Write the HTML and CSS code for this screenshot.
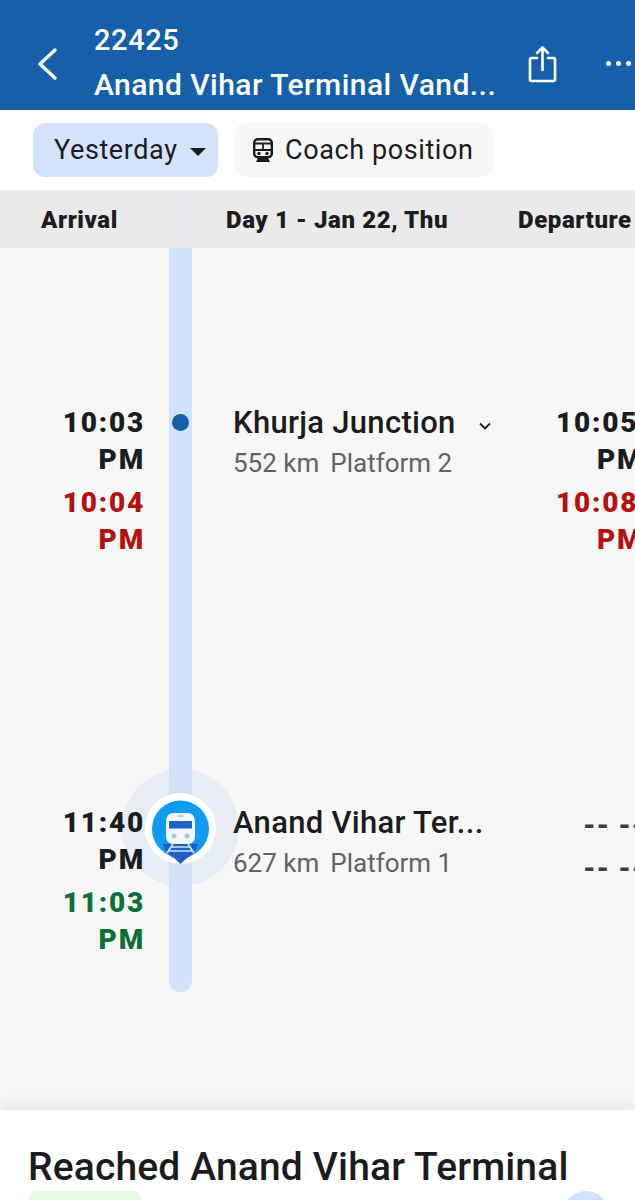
FILE: index.html
```html
<!DOCTYPE html>
<html lang="en">
<head>
    <meta charset="UTF-8">
    <title>22425</title>
    <link rel="stylesheet" href="styles.css">
</head>
<body>
<div class="app">
    <!--top bar-->
    <div class="topbar">
        <svg class="back" width="22" height="34" viewBox="0 0 22 34"><path d="M19 3 L4 17 L19 31" fill="none" stroke="#fff" stroke-width="3.4" stroke-linecap="round" stroke-linejoin="round"/></svg>
        <div class="titles">
            <div class="num">22425</div>
            <div class="name">Anand Vihar Terminal Vand...</div>
        </div>
        <svg class="share" width="30" height="38" viewBox="0 0 30 38"><path d="M9 13 H3.500 a1.500 1.500 0 0 0 -1.500 1.500 V34.500 a1.500 1.500 0 0 0 1.500 1.500 H25.500 a1.500 1.500 0 0 0 1.500 -1.500 V14.500 A1.500 1.500 0 0 0 25.500 13 H20 M14.500 25 V3 M9 8 L14.500 2.500 L20 8" fill="none" stroke="#fff" stroke-width="2.600" stroke-linecap="round" stroke-linejoin="round"/></svg>
        <div class="more"><i></i><i></i><i></i></div>
    </div>

    <!--filter buttons-->
    <div class="toolbar">
        <div class="chip chip-blue">Yesterday <span class="caret"></span></div>
        <div class="chip chip-gray">
            <svg width="20" height="24" viewBox="0 0 20 24"><rect x="1.200" y="1.200" width="17.600" height="18" rx="3.500" fill="none" stroke="#1b1c1e" stroke-width="2.400"/><path d="M1 5.500 H19 M1 12 H19 M10 5.500 V12" stroke="#1b1c1e" stroke-width="1.800"/><circle cx="6" cy="15.500" r="1.700" fill="#1b1c1e"/><circle cx="14" cy="15.500" r="1.700" fill="#1b1c1e"/><path d="M3 24 H17 L15 20 H5 Z" fill="#1b1c1e"/></svg>
            Coach position
        </div>
    </div>

    <!--timeline-->
    <div class="timeline">
        <div class="rail"></div>
        <div class="heads">
            <div class="h-arr">Arrival</div>
            <div class="h-day">Day 1 - Jan 22, Thu</div>
            <div class="h-dep">Departure</div>
        </div>

        <div class="stop stop-first">
            <div class="times">
                <div>10:03</div>
                <div>PM</div>
                <div class="late">10:04</div>
                <div class="late">PM</div>
            </div>
            <div class="mark"><span class="dot"></span></div>
            <div class="station">
                <div class="st-name">Khurja Junction
                    <svg class="chev" width="14" height="10" viewBox="0 0 14 10"><path d="M2 2.500 L7 7.500 L12 2.500" fill="none" stroke="#1b1c1e" stroke-width="1.800"/></svg>
                </div>
                <div class="st-sub"><span>552 km</span><span>Platform 2</span></div>
            </div>
            <div class="times times-dep">
                <div>10:05</div>
                <div>PM</div>
                <div class="late">10:08</div>
                <div class="late">PM</div>
            </div>
        </div>

        <div class="stop stop-last">
            <div class="times">
                <div>11:40</div>
                <div>PM</div>
                <div class="early">11:03</div>
                <div class="early">PM</div>
            </div>
            <div class="mark">
                <div class="halo">
                    <div class="pin">
                        <svg width="62" height="68" viewBox="0 0 62 68">
                            <circle cx="30.500" cy="31" r="28.500" fill="#0f9cf0"/>
                            <path d="M13 46 H48 L46 52 Q42 58 37 60 L30.500 66 L24 60 Q19 58 15 52 Z" fill="#1b62c4"/>
                            <path d="M17 55 L23 46 M44 55 L38 46 M21 49 H40 M18 53 H43" stroke="#cfe2fb" stroke-width="1.700" fill="none"/>
                            <path d="M16 24 Q16 15 24 15 H37 Q45 15 45 24 V38 Q45 46 37 46 H24 Q16 46 16 38 Z" fill="#f3f7fd"/>
                            <rect x="19" y="23" width="23" height="7.500" fill="#1d63c6"/>
                            <rect x="27" y="17" width="7" height="2" rx="1" fill="#b9d2f3"/>
                            <circle cx="24" cy="38" r="2.500" fill="#a8c8f2"/>
                            <circle cx="37" cy="38" r="2.500" fill="#a8c8f2"/>
                        </svg>
                    </div>
                </div>
            </div>
            <div class="station">
                <div class="st-name">Anand Vihar Ter...</div>
                <div class="st-sub"><span>627 km</span><span>Platform 1</span></div>
            </div>
            <div class="times times-dep dashes">
                <div>-- --</div>
                <div>-- --</div>
            </div>
        </div>
    </div>

    <!--bottom sheet-->
    <div class="sheet">
        <h1>Reached Anand Vihar Terminal</h1>
        <div class="sheet-row">
            <div class="tag"></div>
            <div class="round"></div>
        </div>
    </div>
</div>
</body>
</html>
```

FILE: styles.css
```css
*{
    box-sizing: border-box;
}
body{
    margin: 0;
    font-family: Roboto, "Noto Sans", sans-serif;
    color: #1b1c1e;
}
.app{
    width: 635px;
    height: 1200px;
    overflow: hidden;
    display: flex;
    flex-direction: column;
    background: #f7f7f7;
}

/*top bar*/
.topbar{
    height: 110px;
    flex: none;
    background: #1560a8;
    color: #fff;
    display: flex;
    align-items: center;
    padding-left: 36px;
}
.back{
    flex: none;
    margin-top: 17px;
}
.titles{
    width: 434px;
    flex: none;
    margin-left: 36px;
    padding-top: 13px;
    font-weight: 500;
    white-space: nowrap;
}
.num{
    font-size: 29px;
    line-height: 46px;
    letter-spacing: 0.6px;
}
.name{
    font-size: 30px;
    line-height: 44px;
    letter-spacing: 0.45px;
}
.share{
    flex: none;
    margin-top: 18px;
}
.more{
    display: flex;
    gap: 5px;
    margin-left: 48px;
    margin-top: 16px;
}
.more i{
    flex: none;
    width: 5px;
    height: 5px;
    border-radius: 50%;
    background: #fff;
}

/*toolbar*/
.toolbar{
    height: 80px;
    flex: none;
    background: #fff;
    display: flex;
    align-items: center;
    gap: 17px;
    padding-left: 33px;
}
.chip{
    height: 54px;
    border-radius: 12px;
    display: flex;
    align-items: center;
    font-size: 27px;
    letter-spacing: 0.6px;
}
.chip-blue{
    width: 185px;
    padding-left: 21px;
    background: #d3e3fd;
}
.chip-gray{
    width: 258px;
    padding-left: 18px;
    gap: 12px;
    background: #f6f6f6;
}
.caret{
    width: 0;
    height: 0;
    margin-left: 12px;
    margin-top: 3px;
    border-left: 8px solid transparent;
    border-right: 8px solid transparent;
    border-top: 8px solid #1b1c1e;
}

/*timeline*/
.timeline{
    flex: 1;
    position: relative;
    min-height: 0;
}
.rail{
    position: absolute;
    left: 169px;
    top: 0;
    width: 23px;
    height: 802px;
    background: #d0e2fd;
    border-radius: 0 0 12px 12px;
}
.heads{
    height: 58px;
    padding-top: 2px;
    background: rgba(232, 232, 234, 0.93);
    position: relative;
    display: flex;
    align-items: center;
    font-size: 24px;
    font-weight: 900;
    white-space: nowrap;
    letter-spacing: 0.6px;
}
.h-arr{
    width: 226px;
    flex: none;
    padding-left: 41px;
}
.h-day{
    width: 292px;
    flex: none;
}
.stop{
    position: relative;
    display: flex;
    align-items: flex-start;
}
.stop-first{
    padding-top: 156px;
    height: 556px;
}
.times{
    width: 145px;
    flex: none;
    position: relative;
    z-index: 1;
    text-align: right;
    font-size: 28px;
    line-height: 37px;
    font-weight: 900;
    letter-spacing: 1.800px;
}
.times-dep{
    width: 79px;
    text-align: left;
    white-space: nowrap;
}
.times-dep div:nth-child(even){
    padding-left: 41px;
}
.dashes{
    padding-left: 27px;
    line-height: 43px;
    letter-spacing: 1px;
    color: #3c3d40;
}
.dashes div:nth-child(even){
    padding-left: 0;
}
.late{
    color: #b3120e;
}
.early{
    color: #0d7036;
}
.times div:nth-child(3){
    margin-top: 6px;
}
.dashes div:nth-child(2){
    margin-top: 0;
}
.mark{
    width: 71px;
    flex: none;
    position: relative;
}
.dot{
    position: absolute;
    left: 27px;
    top: 10px;
    width: 17px;
    height: 17px;
    border-radius: 50%;
    background: #1560a8;
}
.halo{
    position: absolute;
    left: -23px;
    top: -35px;
    width: 117px;
    height: 117px;
    border-radius: 50%;
    background: rgba(215, 222, 240, 0.42);
}
.pin{
    position: absolute;
    left: 23px;
    top: 24px;
    width: 71px;
    height: 71px;
    border-radius: 50%;
    background: #fff;
}
.pin svg{
    position: absolute;
    left: 5px;
    top: 5px;
}
.station{
    width: 323px;
    flex: none;
    margin-left: 17px;
    position: relative;
    z-index: 1;
    white-space: nowrap;
}
.st-name{
    font-size: 31px;
    line-height: 37px;
    font-weight: 500;
    letter-spacing: 0.3px;
}
.chev{
    margin-left: 14px;
    vertical-align: 2px;
}
.st-sub{
    display: flex;
    gap: 11px;
    margin-top: 6px;
    font-size: 26px;
    line-height: 32px;
    color: #5f6368;
}

/*bottom sheet*/
.sheet{
    height: 90px;
    flex: none;
    background: #fff;
    box-shadow: 0 -6px 14px rgba(0, 0, 0, 0.07);
    padding: 33px 28px 0;
    position: relative;
}
h1{
    margin: 0;
    font-size: 39px;
    line-height: 48px;
    font-weight: 500;
    letter-spacing: 0.15px;
    white-space: nowrap;
}
.sheet-row{
    display: flex;
    justify-content: space-between;
}
.tag{
    width: 113px;
    height: 30px;
    border-radius: 8px;
    background: #e6fae6;
}
.round{
    width: 46px;
    height: 46px;
    border-radius: 50%;
    background: #d3e3fd;
    margin-right: -2px;
}
```
